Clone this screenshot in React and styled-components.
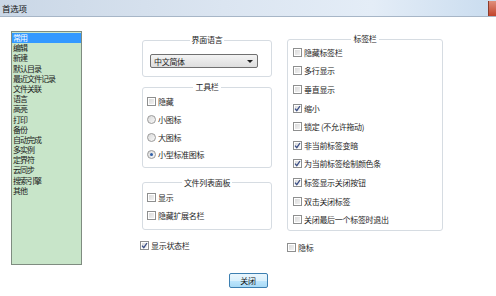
import React from "react";
import styled, { createGlobalStyle } from "styled-components";

const GlobalStyle = createGlobalStyle`
  html, body {
    margin: 0;
    padding: 0;
    background: #fff;
  }
  body {
    font-family: "Noto Sans CJK SC", "Noto Sans", sans-serif;
    font-size: 8px;
    letter-spacing: -0.3px;
    color: #1e1e1e;
  }
`;

const Window = styled.div`
  width: 496px;
  height: 296px;
  background: #fff;
  display: flex;
  flex-direction: column;
  overflow: hidden;
`;

const TitleBar = styled.div`
  height: 16px;
  display: flex;
  align-items: center;
  justify-content: space-between;
  padding-left: 2px;
  background: linear-gradient(90deg, #cad7e6 0%, #dbe5f1 45%, #e4edf7 75%, #c9dcef 100%);
  border-bottom: 1px solid #a7b6c7;
  font-size: 8.5px;
  line-height: 16px;
  color: #111;
`;

const CloseX = styled.div`
  width: 7px;
  height: 15px;
  background: linear-gradient(#e08f7c, #c2432b);
  border-left: 1px solid #8c3b2b;
`;

const Body = styled.div`
  display: flex;
  align-items: flex-start;
  padding: 14px 0 0 11px;
`;

const CategoryList = styled.div`
  width: 71px;
  height: 234px;
  box-sizing: border-box;
  border: 1px solid #7f8c80;
  background: #c8e5c9;
  padding-top: 1px;
`;

const Category = styled.div`
  height: 10.2px;
  line-height: 10.2px;
  padding-left: 1px;
  font-size: 8px;
  letter-spacing: -1px;
  white-space: nowrap;
  color: ${p => (p.$active ? "#fff" : "#1b1b1b")};
  background: ${p => (p.$active ? "#3399ff" : "transparent")};
`;

const Column = styled.div`
  display: flex;
  flex-direction: column;
  width: ${p => p.$width}px;
  margin-left: ${p => p.$left}px;
`;

const Group = styled.fieldset`
  margin: ${p => p.$top}px 0 0 0;
  padding: 0 ${p => p.$side}px ${p => p.$bottom}px ${p => p.$side}px;
  border: 1px solid #d6dce2;
  border-radius: 3px;
  min-width: 0;
`;

const Legend = styled.legend`
  margin: 0 auto;
  padding: 0 2px;
  font-size: 8px;
  line-height: 12px;
  color: #1e1e1e;
`;

const Rows = styled.div`
  display: flex;
  flex-direction: column;
  margin-top: ${p => p.$shift || 0}px;
`;

const Row = styled.label`
  display: flex;
  align-items: center;
  gap: 2px;
  height: ${p => p.$h}px;
  font-size: 8px;
  white-space: nowrap;
  margin: ${p => p.$m || "0"};
`;

const Box = styled.span`
  width: 7px;
  height: 7px;
  border: 1px solid #8e8f8f;
  background: linear-gradient(135deg, #d6d6d6, #f6f6f6);
  box-shadow: inset 0 0 0 1px #fff;
  display: inline-flex;
  align-items: center;
  justify-content: center;
  flex: none;
`;

const Radio = styled.span`
  width: 7px;
  height: 7px;
  border-radius: 50%;
  border: 1px solid #9a9a9a;
  background: linear-gradient(135deg, #d9d9d9, #f8f8f8);
  display: inline-flex;
  align-items: center;
  justify-content: center;
  flex: none;
  &::after {
    content: "";
    width: 3px;
    height: 3px;
    border-radius: 50%;
    background: ${p => (p.$on ? "#2f5fa8" : "transparent")};
  }
`;

const SelectBox = styled.div`
  margin: 8px 0 8px 0;
  width: 108px;
  height: 14px;
  box-sizing: border-box;
  border: 1px solid #707070;
  border-radius: 2px;
  background: linear-gradient(#f3f3f3, #dedede);
  display: flex;
  align-items: center;
  justify-content: space-between;
  padding: 0 4px 0 3px;
  font-size: 8px;
`;

const Arrow = styled.span`
  width: 0;
  height: 0;
  border-left: 3px solid transparent;
  border-right: 3px solid transparent;
  border-top: 3px solid #222;
`;

const Footer = styled.div`
  display: flex;
  justify-content: center;
  margin-top: 8px;
`;

const Button = styled.button`
  width: 39px;
  height: 15px;
  padding: 0;
  border: 1px solid #3c7fb1;
  border-radius: 2px;
  background: linear-gradient(#eaf6fd 0%, #d9f0fc 50%, #bee6fd 51%, #a7d9f5 100%);
  font-family: "Noto Sans CJK SC", sans-serif;
  font-size: 8px;
  letter-spacing: -0.3px;
  line-height: 13px;
  color: #111;
`;

const Check = () => (
  <svg width="7" height="7" viewBox="0 0 7 7">
    <path d="M1 3.6 L2.8 5.6 L6 1" fill="none" stroke="#3b4f86" strokeWidth="1.3" />
  </svg>
);

const CheckRow = ({ on, text, h, m }) => (
  <Row $h={h} $m={m}>
    <Box>{on && <Check />}</Box>
    {text}
  </Row>
);

const RadioRow = ({ on, text, h }) => (
  <Row $h={h}>
    <Radio $on={on} />
    {text}
  </Row>
);

const categories = [
  "常用", "编辑", "新建", "默认目录", "最近文件记录", "文件关联", "语言", "高亮",
  "打印", "备份", "自动完成", "多实例", "定界符", "云同步", "搜索引擎", "其他",
];

const tabOptions = [
  ["隐藏标签栏", false],
  ["多行显示", false],
  ["垂直显示", false],
  ["缩小", true],
  ["锁定 (不允许拖动)", false],
  ["非当前标签变暗", true],
  ["为当前标签绘制颜色条", true],
  ["标签显示关闭按钮", true],
  ["双击关闭标签", false],
  ["关闭最后一个标签时退出", false],
];

export default function App() {
  return (
    <Window>
      <GlobalStyle />
      <TitleBar>
        <span>首选项</span>
        <CloseX />
      </TitleBar>
      <Body>
        <CategoryList>
          {categories.map((c, i) => (
            <Category key={c} $active={i === 0}>{c}</Category>
          ))}
        </CategoryList>

        <Column $width={130} $left={60}>
          <Group $top={3} $side={7} $bottom={0}>
            <Legend>界面语言</Legend>
            <SelectBox>
              <span>中文简体</span>
              <Arrow />
            </SelectBox>
          </Group>
          <Group $top={4} $side={4} $bottom={3}>
            <Legend>工具栏</Legend>
            <Rows>
              <CheckRow h={17.7} text="隐藏" />
              <RadioRow h={17.7} text="小图标" />
              <RadioRow h={17.7} text="大图标" />
              <RadioRow h={17.7} on text="小型标准图标" />
            </Rows>
          </Group>
          <Group $top={9} $side={4} $bottom={4}>
            <Legend>文件列表面板</Legend>
            <Rows>
              <CheckRow h={18} text="显示" />
              <CheckRow h={18} text="隐藏扩展名栏" />
            </Rows>
          </Group>
          <CheckRow h={18} m="7px 0 0 -2px" on text="显示状态栏" />
        </Column>

        <Column $width={156} $left={15}>
          <Group $top={2} $side={5} $bottom={1}>
            <Legend>标签栏</Legend>
            <Rows $shift={-2}>
              {tabOptions.map(([t, on]) => (
                <CheckRow key={t} h={18.6} on={on} text={t} />
              ))}
            </Rows>
          </Group>
          <CheckRow h={18} m="8px 0 0 0" text="隐标" />
        </Column>
      </Body>
      <Footer>
        <Button>关闭</Button>
      </Footer>
    </Window>
  );
}
